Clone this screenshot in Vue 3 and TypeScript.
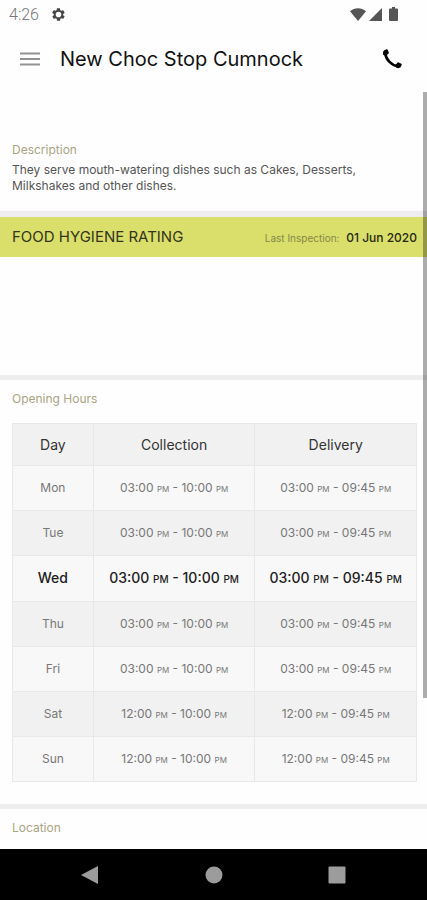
<script setup lang="ts">
interface Time {
  clock: string
  period: string
}

interface DayHours {
  day: string
  collection: Time[]
  delivery: Time[]
  today?: boolean
}

const pm = (clock: string): Time => ({ clock, period: 'PM' })

const row = (day: string, opens: string, today = false): DayHours => ({
  day,
  collection: [pm(opens), pm('10:00')],
  delivery: [pm(opens), pm('09:45')],
  today,
})

const week: DayHours[] = [
  row('Mon', '03:00'),
  row('Tue', '03:00'),
  row('Wed', '03:00', true),
  row('Thu', '03:00'),
  row('Fri', '03:00'),
  row('Sat', '12:00'),
  row('Sun', '12:00'),
]
</script>

<template>
  <div class="screen">
    <div class="status">
      <span class="clock">4:26</span>
      <svg class="gear" viewBox="0 0 24 24" aria-hidden="true">
        <path fill-rule="evenodd" d="M19.4 13c.1-.3.1-.7.1-1s0-.7-.1-1l2.100-1.600c.2-.2.200-.4.100-.6l-2-3.500c-.1-.2-.4-.3-.6-.2l-2.500 1c-.5-.4-1.100-.7-1.700-1l-.4-2.600c0-.3-.2-.5-.5-.5h-4c-.2 0-.4.2-.5.5l-.4 2.600c-.6.3-1.200.6-1.700 1l-2.500-1c-.2-.1-.5 0-.6.2l-2 3.500c-.1.2-.1.4.1.6L4.500 11c0 .3-.1.7-.1 1s0 .7.1 1l-2.100 1.600c-.2.2-.2.4-.1.6l2 3.500c.1.2.4.3.6.2l2.500-1c.5.4 1.100.7 1.700 1l.4 2.600c.1.3.3.5.5.5h4c.3 0 .5-.2.500-.5l.4-2.600c.6-.3 1.200-.6 1.700-1l2.500 1c.2.1.5 0 .6-.2l2-3.500c.1-.2.1-.4-.1-.6L19.400 13zM12 16.500a4.500 4.500 0 1 1 0-9 4.500 4.500 0 0 1 0 9z" />
      </svg>
      <div class="signals">
        <svg class="wifi" viewBox="0 0 16 13" aria-hidden="true"><path d="M8 13 0 3.200C4.600-.9 11.400-.9 16 3.200z" /></svg>
        <svg class="cell" viewBox="0 0 13 13" aria-hidden="true"><path d="M13 0v13H0z" /></svg>
        <svg class="battery" viewBox="0 0 9 14" aria-hidden="true"><path d="M3 0h3v1.500h2a1 1 0 0 1 1 1V13a1 1 0 0 1-1 1H1a1 1 0 0 1-1-1V2.500a1 1 0 0 1 1-1h2z" /></svg>
      </div>
    </div>

    <header class="bar">
      <button class="icon-button" type="button" aria-label="Menu">
        <svg class="menu" viewBox="0 0 20 14" aria-hidden="true"><path d="M0 1.500h20M0 7h20M0 12.500h20" /></svg>
      </button>
      <h1>New Choc Stop Cumnock</h1>
      <button class="icon-button" type="button" aria-label="Call">
        <svg class="phone" viewBox="0 0 20 20" aria-hidden="true">
          <path d="M3.200 4.500C4 10.500 9.500 16.500 16 17.300" fill="none" stroke="#000" stroke-width="2.600" />
          <path d="M2.300 1.200 4.500.3c.5-.2 1 0 1.200.5l1.100 2.700c.2.5 0 .9-.4 1.200L4.300 6.600 1.300 5.900C.7 3.900 1 2 2.300 1.200zM18.700 18.100l1-2c.2-.5.1-1-.4-1.300l-2.700-1.400c-.4-.2-.9-.1-1.200.3l-1.700 2.100.6 3c1.800.7 3.600.4 4.400-.7z" />
        </svg>
      </button>
    </header>

    <div class="viewport">
      <main class="content">
        <section class="description">
          <h2>Description</h2>
          <p>They serve mouth-watering dishes such as Cakes, Desserts, Milkshakes and other dishes.</p>
        </section>

        <section class="hygiene">
          <div class="rating">
            <h2 class="rating-title">FOOD HYGIENE RATING</h2>
            <span class="inspected">Last Inspection: <strong>01 Jun 2020</strong></span>
          </div>
        </section>

        <section class="hours">
          <h2 id="hours-title">Opening Hours</h2>
          <table aria-labelledby="hours-title">
            <thead>
              <tr>
                <th class="day-column" scope="col">Day</th>
                <th scope="col">Collection</th>
                <th scope="col">Delivery</th>
              </tr>
            </thead>
            <tbody>
              <tr v-for="entry in week" :key="entry.day" :class="{ today: entry.today }">
                <th scope="row">{{ entry.day }}</th>
                <td v-for="(span, index) in [entry.collection, entry.delivery]" :key="index">
                  {{ span[0].clock }} <small>{{ span[0].period }}</small> - {{ span[1].clock }} <small>{{ span[1].period }}</small>
                </td>
              </tr>
            </tbody>
          </table>
        </section>

        <section class="location">
          <h2>Location</h2>
        </section>
      </main>
      <div class="thumb"></div>
    </div>

    <nav class="system">
      <button type="button" aria-label="Back"><svg viewBox="0 0 18 18" aria-hidden="true"><path d="M17 0v18L0 9z" /></svg></button>
      <button type="button" aria-label="Home"><svg viewBox="0 0 18 18" aria-hidden="true"><circle cx="9" cy="9" r="8.500" /></svg></button>
      <button type="button" aria-label="Recent apps"><svg viewBox="0 0 18 18" aria-hidden="true"><rect x=".5" y=".5" width="17" height="17" rx="1" /></svg></button>
    </nav>
  </div>
</template>

<style>
body {
  margin: 0;
  background: #fff;
}
</style>

<style scoped>
* {
  box-sizing: border-box;
}

.screen {
  display: flex;
  flex-direction: column;
  height: 100vh;
  background: #fefefe;
  color: #222;
  font-family: Inter, "Liberation Sans", sans-serif;
}

h1,
h2,
p {
  margin: 0;
  font-weight: 400;
}

button {
  display: flex;
  align-items: center;
  justify-content: center;
  padding: 0;
  border: 0;
  background: none;
}

svg {
  display: block;
}

.status {
  display: flex;
  align-items: center;
  gap: 12px;
  height: 28px;
  padding: 0 29px 0 9px;
  fill: #555;
}

.clock {
  color: #777;
  font-family: Roboto, sans-serif;
  font-size: 16px;
  font-weight: 300;
}

.gear {
  width: 15px;
  height: 15px;
  fill: #444;
}

.signals {
  display: flex;
  align-items: center;
  gap: 3px;
  margin-left: auto;
}

.wifi {
  width: 16px;
  height: 13px;
}

.cell {
  width: 13px;
  height: 13px;
}

.battery {
  width: 9px;
  height: 14px;
  margin-left: 4px;
}

.bar {
  display: flex;
  align-items: center;
  gap: 10px;
  height: 64px;
  padding: 0 25px 3px 10px;
}

.icon-button {
  width: 40px;
  height: 40px;
}

.icon-button:last-child {
  justify-content: flex-end;
}

.menu {
  width: 20px;
  height: 14px;
  stroke: #929292;
  stroke-width: 2;
}

.phone {
  width: 20px;
  height: 20px;
}

h1 {
  flex: 1;
  color: #111;
  font-size: 20px;
  line-height: 28px;
  white-space: nowrap;
}

.viewport {
  position: relative;
  flex: 1;
  min-height: 0;
}

.content {
  height: 100%;
  overflow-y: auto;
  scrollbar-width: none;
}

.thumb {
  position: absolute;
  top: 0;
  right: 0;
  width: 4px;
  height: 80%;
  background: rgba(0, 0, 0, 0.32);
}

h2 {
  color: #aaa582;
  font-size: 12px;
  line-height: 16px;
}

.description {
  padding: 50px 12px 17px;
  border-bottom: 6px solid #efecef;
}

.description p {
  max-width: 360px;
  margin-top: 4px;
  color: #555;
  font-size: 12px;
  line-height: 16px;
}

.hygiene {
  padding-bottom: 118px;
  border-bottom: 5px solid #eee;
}

.rating {
  display: flex;
  align-items: center;
  justify-content: space-between;
  height: 40px;
  padding: 0 10px 0 12px;
  background: #dade6a;
}

.rating-title {
  color: #33351c;
  font-size: 15px;
}

.inspected {
  color: #85884a;
  font-size: 10px;
}

.inspected strong {
  margin-left: 4px;
  color: #26280f;
  font-size: 12px;
  font-weight: 500;
}

.hours {
  padding: 11px 10px 22px 12px;
  border-bottom: 5px solid #eee;
}

table {
  width: 100%;
  margin-top: 16px;
  border-collapse: collapse;
  table-layout: fixed;
  color: #777;
  font-size: 12px;
  text-align: center;
}

th,
td {
  height: 45px;
  padding: 0 0 2px;
  border: 1px solid #e8e8e8;
  font-weight: 400;
  white-space: nowrap;
}

thead th {
  height: 42px;
  padding: 0;
  color: #333;
  font-size: 14px;
}

.day-column {
  width: 20%;
}

thead tr,
tbody tr:nth-child(even) {
  background: #f1f1f1;
}

tbody tr:nth-child(odd) {
  background: #f8f8f8;
}

small {
  font-size: 8px;
}

.today th,
.today td {
  height: 46px;
  color: #222;
  font-size: 14px;
  font-weight: 500;
}

.today small {
  font-size: 10px;
}

.location {
  padding: 11px 12px 16px;
}

.system {
  display: flex;
  align-items: center;
  justify-content: space-between;
  height: 51px;
  padding: 0 66px;
  background: #000;
}

.system button {
  width: 48px;
  height: 48px;
}

.system svg {
  width: 18px;
  height: 18px;
  fill: #9c9c9c;
}
</style>
